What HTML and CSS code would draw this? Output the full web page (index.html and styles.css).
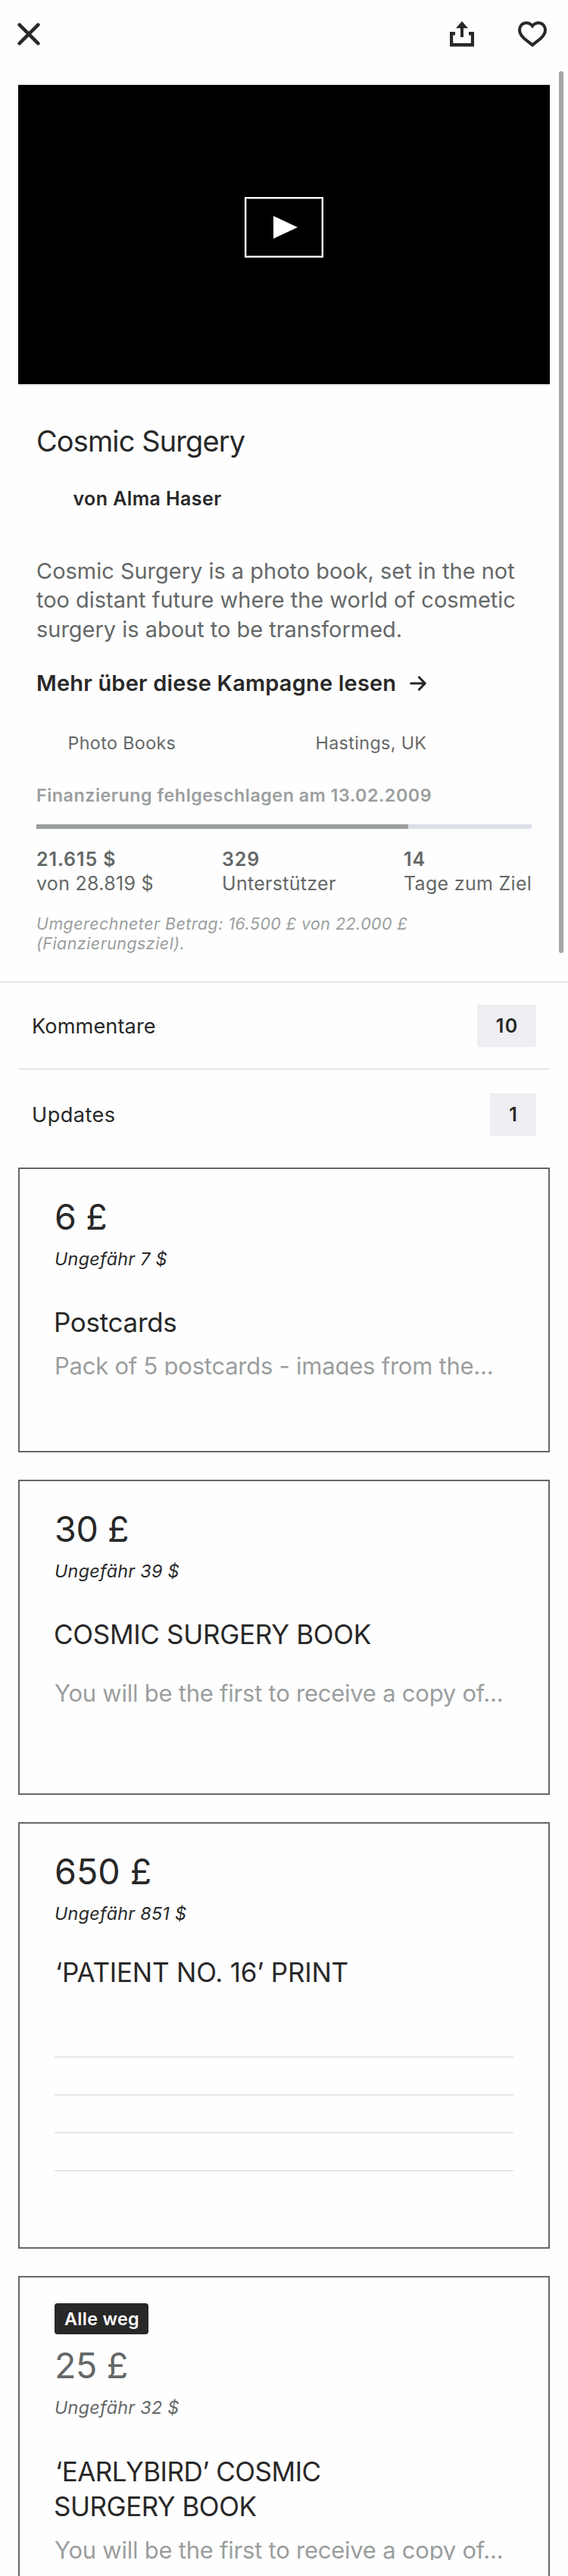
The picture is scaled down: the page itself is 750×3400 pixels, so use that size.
FILE: index.html
```html
<!DOCTYPE html>
<html lang="de">
<head>
<meta charset="utf-8">
<title>Cosmic Surgery</title>
<link rel="stylesheet" href="styles.css">
</head>
<body>
<div class="page">
  <header class="topbar">
    <svg class="icon-close" width="34" height="34" viewBox="0 0 34 34" fill="none" stroke="#282828" stroke-width="4.6" stroke-linecap="round"><path d="M4.6 4.6 29.4 29.4M29.4 4.6 4.6 29.4"/></svg>
    <div class="actions">
      <svg width="34" height="34" viewBox="0 0 34 34" fill="#282828"><path d="M17 0 25 9.3H19V21H15V9.3H9Z"/><path d="M1 14H8V18.4H5.2V29H28.8V18.4H26V14H33V33.4H1Z"/></svg>
      <svg width="40" height="34" viewBox="0 0 40 34" fill="none" stroke="#282828" stroke-width="4"><path d="M20 6.3C22.5 3.2 25.5 2.2 28.3 2.3C33.5 2.5 37 6.5 37 11.5C37 16 34.6 19.3 31 22.7L20 31.4L9 22.7C5.4 19.3 3 16 3 11.5C3 6.5 6.5 2.5 11.7 2.3C14.5 2.2 17.5 3.2 20 6.3Z"/></svg>
    </div>
  </header>

  <section class="video">
    <div class="play">
      <svg width="32" height="30" viewBox="0 0 32 30" fill="#fff"><path d="M0 0 32 15 0 30Z"/></svg>
    </div>
  </section>

  <section class="summary">
    <h1 class="title">Cosmic Surgery</h1>
    <p class="author">von Alma Haser</p>
    <p class="blurb">Cosmic Surgery is a photo book, set in the not<br>too distant future where the world of cosmetic<br>surgery is about to be transformed.</p>
    <a class="more">Mehr über diese Kampagne lesen
      <svg width="22" height="20" viewBox="0 0 22 20" fill="none" stroke="#282828" stroke-width="3.2" stroke-linecap="round" stroke-linejoin="round"><path d="M1.8 10H20M12.5 2 20.2 10 12.5 18"/></svg></a>
    <div class="meta"><span>Photo Books</span><span>Hastings, UK</span></div>
    <p class="status">Finanzierung fehlgeschlagen am 13.02.2009</p>
    <div class="progress"><div class="progress-fill" style="width:75%"></div></div>
    <div class="stats">
      <div><b class="amount">21.615 $</b><span>von 28.819 $</span></div>
      <div><b>329</b><span>Unterstützer</span></div>
      <div><b>14</b><span>Tage zum Ziel</span></div>
    </div>
    <p class="converted">Umgerechneter Betrag: 16.500 £ von 22.000 £<br>(Fianzierungsziel).</p>
  </section>

  <nav class="links">
    <div class="link"><span>Kommentare</span><b class="count wide">10</b></div>
    <div class="link last"><span class="updates">Updates</span><b class="count">1</b></div>
  </nav>

  <main class="rewards">
    <article class="reward small">
      <div class="price">6 £</div>
      <div class="approx">Ungefähr 7 $</div>
      <h2>Postcards</h2>
      <p class="text cut">Pack of 5 postcards - images from the...</p>
    </article>
    <article class="reward medium">
      <div class="price">30 £</div>
      <div class="approx">Ungefähr 39 $</div>
      <h2>COSMIC SURGERY BOOK</h2>
      <p class="text spaced">You will be the first to receive a copy of...</p>
    </article>
    <article class="reward large">
      <div class="price triple">650 £</div>
      <div class="approx">Ungefähr 851 $</div>
      <h2 class="near quoted">‘PATIENT NO. 16’ PRINT</h2>
      <div class="rules"><hr><hr><hr><hr></div>
    </article>
    <article class="reward gone">
      <span class="tag">Alle weg</span>
      <div class="price">25 £</div>
      <div class="approx">Ungefähr 32 $</div>
      <h2 class="far quoted">‘EARLYBIRD’ COSMIC<br><span class="line-two">SURGERY BOOK</span></h2>
      <p class="text cut">You will be the first to receive a copy of...</p>
    </article>
  </main>
  <div class="scrollbar"></div>
</div>
</body>
</html>
```
FILE: styles.css
```css
* { box-sizing: border-box; }
html, body { margin: 0; background: #fefefe; }
body { font-family: Inter, "Liberation Sans", sans-serif; color: #282828; }
h1, h2, p, hr { margin: 0; font-weight: 400; }
svg { display: block; flex: none; }
.page { position: relative; width: 750px; height: 3400px; overflow: hidden; white-space: nowrap; }

.topbar { height: 112px; padding: 28px 27px 0 21px; display: flex; justify-content: space-between; align-items: flex-start; }
.actions { display: flex; gap: 56px; }

.video { height: 397px; margin: 0 24px; padding-top: 148px; background: #000; border-bottom: 2px solid #e6e7e7; display: flex; justify-content: center; align-items: flex-start; }
.play { width: 104px; height: 80px; border: 2px solid #fff; box-shadow: inset 0 0 0 1px #666; padding: 23px 0 0 36px; }

.summary { padding: 49px 48px 37px; border-bottom: 2px solid #e6e7e7; }
.title { font-size: 38px; line-height: 48px; letter-spacing: -.89px; }
.author { margin: 36px 0 0 48.5px; font-size: 25px; line-height: 32px; font-weight: 600; letter-spacing: .4px; }
.blurb { margin-top: 60.5px; height: 115.5px; font-size: 29px; line-height: 38.5px; letter-spacing: -.02px; color: #656868; }
.more { display: flex; align-items: center; gap: 18px; margin-top: 33px; font-size: 29px; line-height: 37px; font-weight: 600; letter-spacing: .19px; }
.meta { display: grid; grid-template-columns: 327px 1fr; margin-top: 45px; padding-left: 41.5px; font-size: 23.3px; line-height: 31px; letter-spacing: .36px; color: #656868; }
.status { margin-top: 38px; font-size: 23.3px; line-height: 31px; font-weight: 600; letter-spacing: .51px; color: #9b9e9e; }
.progress { height: 6px; margin-top: 23px; background: #dcdee8; }
.progress-fill { height: 6px; background: #9b9e9e; }
.stats { display: grid; grid-template-columns: 245px 240px 1fr; margin-top: 24px; font-size: 25px; line-height: 32px; letter-spacing: .3px; color: #656868; }
.stats b, .stats span { display: block; font-weight: 400; }
.stats b { font-weight: 600; letter-spacing: .9px; }
.converted { margin-top: 24px; font-size: 21.4px; line-height: 26px; font-style: italic; letter-spacing: .49px; color: #9b9e9e; }

.links { margin: 0 24px; }
.link { display: flex; justify-content: space-between; align-items: flex-start; height: 115px; padding: 29px 18px 0; border-bottom: 2px solid #e6e7e7; font-size: 27.2px; }
.link.last { height: 129px; padding-top: 31px; border: 0; }
.link span { margin-top: 12px; line-height: 33px; letter-spacing: .07px; }
.link .updates { letter-spacing: .4px; }
.count { width: 61px; height: 56px; background: #eeeef3; font-size: 25px; font-weight: 600; line-height: 56px; text-align: center; }
.count.wide { width: 78px; letter-spacing: 1.2px; text-indent: 1.2px; }

.rewards { display: grid; gap: 36px; margin: 0 24px; }
.reward { border: 2px solid #656868; padding: 35px 46px 0; }
.small { height: 376px; }
.medium { height: 416px; }
.large { height: 563px; }
.gone { height: 430px; padding-top: 34px; }
.price { font-size: 46.6px; line-height: 56px; letter-spacing: -.4px; }
.price.triple { letter-spacing: 0; }
.approx { margin-top: 12px; font-size: 23.3px; line-height: 31px; font-style: italic; letter-spacing: .3px; }
.reward h2 { margin: 45px 0 0 -1px; font-size: 35px; line-height: 46px; letter-spacing: -.3px; }
.reward h2.quoted { margin-left: 1px; letter-spacing: -.21px; }
.reward h2.near { margin-top: 39px; }
.reward h2.far { margin-top: 46px; letter-spacing: -.5px; }
.line-two { margin-left: -2px; }
.text { margin-top: 16px; font-size: 31px; line-height: 37px; letter-spacing: -.24px; color: #9b9e9e; }
.text.cut { height: 31px; overflow: hidden; }
.text.spaced { margin-top: 36px; }
.gone .text { height: 32px; }
.rules { display: grid; gap: 48px; margin-top: 88px; }
.rules hr { height: 2px; border: 0; background: #e6e7e7; }
.tag { display: block; width: 124px; height: 41px; padding-left: 13px; margin-bottom: 13px; border-radius: 4px; background: #282828; color: #fff; font-size: 23.3px; font-weight: 600; line-height: 41px; letter-spacing: .33px; }
.gone .price, .gone .approx { color: #656868; }

.scrollbar { position: absolute; top: 94px; left: 738px; width: 6px; height: 1164px; border-radius: 3px; background: #a5a6a6; }
```
